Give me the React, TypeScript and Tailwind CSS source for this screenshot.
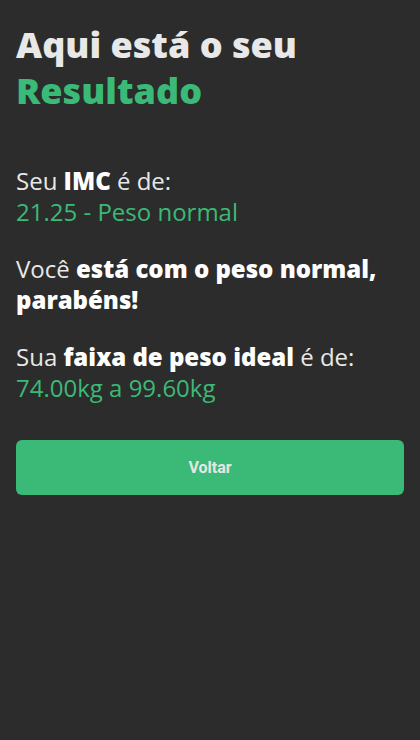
import React from "react";

const green = "text-[#3bba77]";

export default function App() {
  return (
    <div className="min-h-[740px] w-full bg-[#2c2c2c] px-4 pt-[22px] font-['Open_Sans',sans-serif] text-[#e8e8e8]">
      <h1 className="text-[36px] font-extrabold leading-[46px]">
        Aqui está o seu
        <br />
        <span className={green}>Resultado</span>
      </h1>

      <div className="mt-[51px] flex flex-col gap-[26px] text-[24px] leading-[31px]">
        <p>
          Seu <strong className="font-extrabold text-white">IMC</strong> é de:
          <br />
          <span className={green}>21.25 - Peso normal</span>
        </p>
        <p>
          Você{" "}
          <strong className="font-extrabold text-white">
            está com o peso normal, parabéns!
          </strong>
        </p>
        <p>
          Sua <strong className="font-extrabold text-white">faixa de peso ideal</strong> é de:
          <br />
          <span className={green}>74.00kg a 99.60kg</span>
        </p>
      </div>

      <button className="mt-[37px] flex h-[55px] w-full items-center justify-center rounded-md bg-[#3bba77] font-['Roboto',sans-serif] text-base font-bold text-[#e6e6e6]">
        Voltar
      </button>
    </div>
  );
}
